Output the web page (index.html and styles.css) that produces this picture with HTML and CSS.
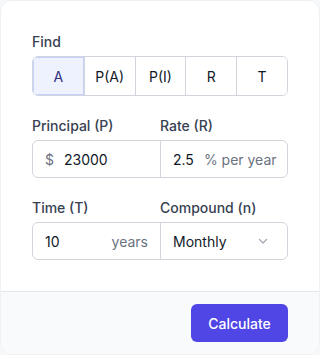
FILE: index.html
```html
<!DOCTYPE html>
<html lang="en">
<head>
    <meta charset="UTF-8">
    <meta name="viewport" content="width=device-width, initial-scale=1.0">
    <link rel="stylesheet" href="styles.css">
</head>
<body>
<div class="card">
    <div class="card-body">
        <!-- What to solve for -->
        <div class="field">
            <div class="label">Find</div>
            <div class="segments">
                <button class="seg active">A</button>
                <button class="seg">P(A)</button>
                <button class="seg">P(I)</button>
                <button class="seg">R</button>
                <button class="seg">T</button>
            </div>
        </div>

        <div class="field">
            <div class="pair-labels">
                <div class="label">Principal (P)</div>
                <div class="label">Rate (R)</div>
            </div>
            <div class="pair">
                <div class="box">
                    <span class="addon">$</span>
                    <span class="value">23000</span>
                </div>
                <div class="box">
                    <span class="value grow">2.5</span>
                    <span class="addon">% per year</span>
                </div>
            </div>
        </div>

        <div class="field">
            <div class="pair-labels">
                <div class="label">Time (T)</div>
                <div class="label">Compound (n)</div>
            </div>
            <div class="pair">
                <div class="box">
                    <span class="value grow">10</span>
                    <span class="addon">years</span>
                </div>
                <div class="box select">
                    <span class="value grow">Monthly</span>
                    <svg class="chevron" width="16" height="16" viewBox="0 0 20 20" fill="none">
                        <path d="M5.5 8 10 12.5 14.5 8" stroke="#9ca3af" stroke-width="1.5" stroke-linecap="round" stroke-linejoin="round"/>
                    </svg>
                </div>
            </div>
        </div>
    </div>

    <div class="card-footer">
        <button class="btn-primary">Calculate</button>
    </div>
</div>
</body>
</html>
```

FILE: styles.css
```css
body {
    margin: 0;
    background: #f7f8fa;
    font-family: 'Inter', sans-serif;
    font-size: 14px;
    color: #111827;
}

.card {
    background: #fff;
    height: 355px;
    box-sizing: border-box;
    border: 1px solid #eef0f3;
    border-radius: 12px;
    overflow: hidden;
    display: flex;
    flex-direction: column;
}

.card-body {
    padding: 31px;
    display: flex;
    flex-direction: column;
    gap: 20px;
}

.label {
    font-size: 14px;
    line-height: 20px;
    font-weight: 500;
    color: #374151;
}

.field > .label,
.pair-labels {
    margin-bottom: 4px;
}

/* Segmented control */
.segments {
    display: grid;
    grid-template-columns: repeat(5, 1fr);
    height: 40px;
    border: 1px solid #d1d5db;
    border-radius: 6px;
    overflow: hidden;
    box-sizing: border-box;
}

.seg {
    border: 0;
    border-left: 1px solid #d1d5db;
    background: #fff;
    font-family: inherit;
    font-size: 14px;
    font-weight: 400;
    color: #111827;
    padding: 0;
}

.seg:first-child {
    border-left: 0;
}

.seg.active {
    background: #eef2ff;
    color: #312e81;
    box-shadow: inset 0 0 0 1px #c7d2fe;
}

/* Paired inputs */
.pair-labels,
.pair {
    display: grid;
    grid-template-columns: 1fr 1fr;
}

.pair {
    height: 38px;
    border: 1px solid #d1d5db;
    border-radius: 6px;
    box-sizing: border-box;
}

.box {
    display: flex;
    align-items: center;
    gap: 10px;
    padding: 0 12px;
    white-space: nowrap;
    min-width: 0;
}

.box + .box {
    border-left: 1px solid #d1d5db;
}

.value {
    font-size: 14px;
    color: #111827;
}

.grow {
    flex: 1;
}

.addon {
    color: #6b7280;
    font-size: 14px;
}

.chevron {
    margin-right: 4px;
}

/* Footer */
.card-footer {
    flex: 1;
    background: #f9fafb;
    border-top: 1px solid #e5e7eb;
    display: flex;
    justify-content: flex-end;
    align-items: flex-start;
    padding: 12px 31px;
}

.btn-primary {
    background: #4f46e5;
    color: #fff;
    border: 0;
    border-radius: 6px;
    height: 38px;
    width: 97px;
    font-family: inherit;
    font-size: 14px;
    font-weight: 500;
}
```
